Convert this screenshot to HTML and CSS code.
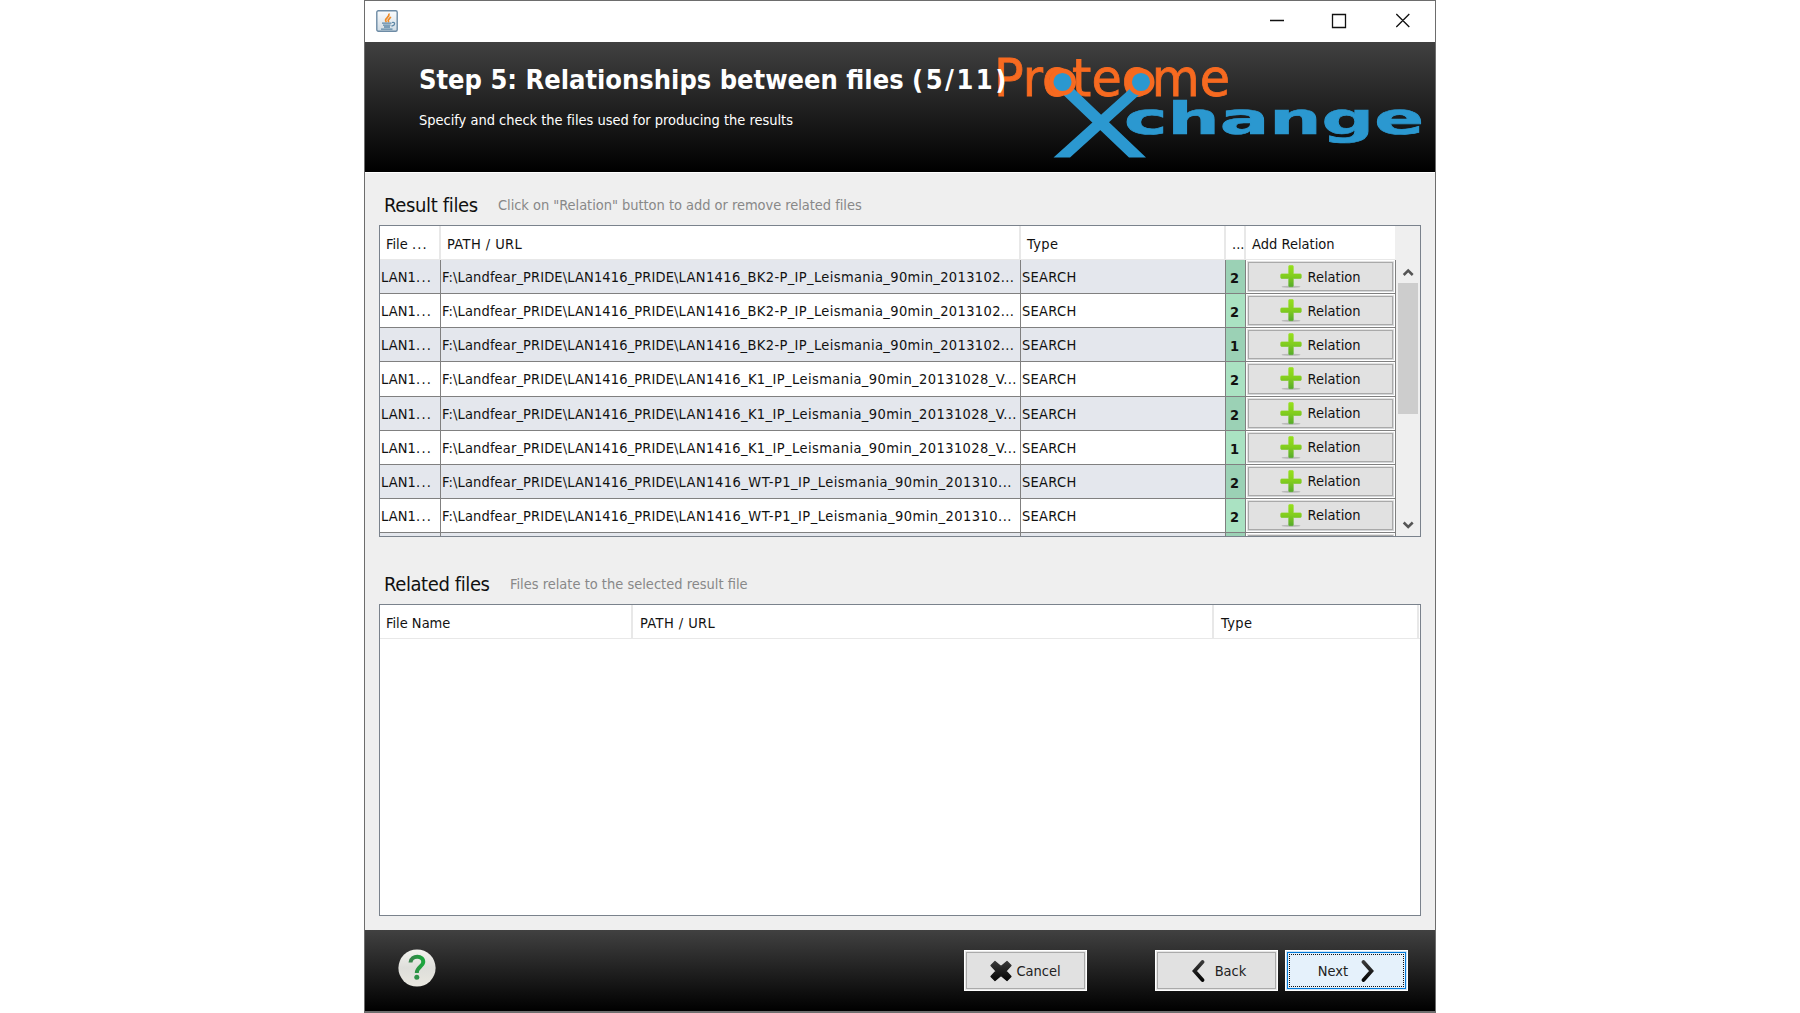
FILE: index.html
```html
<!DOCTYPE html>
<html lang="en">
<head>
<meta charset="utf-8">
<title>Relationships between files</title>
<link rel="stylesheet" href="styles.css">
</head>
<body>
<svg width="0" height="0" class="defs">
  <defs>
    <linearGradient id="green" x1="0" y1="0" x2="0" y2="1"><stop offset="0" stop-color="#95e01c"/><stop offset=".5" stop-color="#82cd1e"/><stop offset="1" stop-color="#56ab2c"/></linearGradient>
    <linearGradient id="ink" x1="0" y1="0" x2="0" y2="1"><stop offset="0" stop-color="#383838"/><stop offset="1" stop-color="#050505"/></linearGradient>
    <symbol id="plus" viewBox="0 0 22 24">
      <ellipse cx="11" cy="21.8" rx="9.5" ry="1" fill="#b9b9b9"/>
      <path d="M9.500 .5h3q.8 0 .8.8v7.600h7q1 0 1 1v2.600q0 1-1 1h-7v7.400q0 .8-.8.8h-3q-.8 0-.8-.8v-7.400h-7q-1 0-1-1V9.900q0-1 1-1h7V1.300q0-.8.8-.8z" fill="url(#green)" stroke="url(#green)" stroke-width=".6"/>
    </symbol>
  </defs>
</svg>
<main class="window">
  <div class="titlebar">
    <svg class="java" width="22" height="22" viewBox="0 0 22 22">
      <defs><linearGradient id="jb" x1="0" y1="0" x2="0" y2="1"><stop offset="0" stop-color="#fbfcfd"/><stop offset="1" stop-color="#cfdbe4"/></linearGradient></defs>
      <rect x=".8" y=".8" width="20.400" height="20.400" rx="1.500" fill="url(#jb)" stroke="#6d8ba5" stroke-width="1.400"/>
      <path d="M10.500 12C7 9 14 7.500 13 3.500M13 12c-2.500-2 1-3 1.700-5.200" fill="none" stroke="#f08a24" stroke-width="1.700"/>
      <path d="M6 13.200h9.500M7 15.200h7.500M8 17h6M5 19.200h11.500M16 12.500c3.500-1 3.500 3-.5 3.500" fill="none" stroke="#5d87a6" stroke-width="1.300"/>
    </svg>
    <svg class="controls" width="150" height="22" viewBox="0 0 150 22">
      <path d="M3 10.500h14M65.500 4.500h13v13h-13zM129.300 4l13 13M142.300 4l-13 13" fill="none" stroke="#111" stroke-width="1.300"/>
    </svg>
  </div>
  <header class="banner">
    <svg class="logo" width="440" height="130" viewBox="995 42 440 130">
      <text x="994" y="95.500" class="proteome" textLength="236" lengthAdjust="spacingAndGlyphs">Proteome</text>
      <path d="M1054 86H1071L1146 157.500H1129ZM1133 86H1149L1070 157.500H1053.500Z" class="x-arms"/>
      <circle cx="1062.500" cy="82" r="11.300" class="node"/>
      <circle cx="1141" cy="82" r="11.300" class="node"/>
      <text x="1124" y="134" class="change" textLength="300" lengthAdjust="spacingAndGlyphs">change</text>
    </svg>
    <h1>Step 5: Relationships between files <span>(5/11)</span></h1>
    <p>Specify and check the files used for producing the results</p>
  </header>
  <section class="content">
    <div class="heading"><h2>Result files</h2><span class="hint">Click on "Relation" button to add or remove related files</span></div>
    <div class="box results">
      <div class="grid">
        <div class="head cols"><span>File <i>...</i></span><span class="path">PATH / URL</span><span class="path">Type</span><span>...</span><span>Add Relation</span></div>
        <div class="row cols"><span>LAN1<i>...</i></span><span>F:\Landfear_PRIDE\LAN1416_PRIDE\<em>LAN1416_BK2-P_IP_Leismania_90min_2013102...</em></span><span>SEARCH</span><b>2</b><button><svg><use href="#plus"/></svg>Relation</button></div>
        <div class="row cols"><span>LAN1<i>...</i></span><span>F:\Landfear_PRIDE\LAN1416_PRIDE\<em>LAN1416_BK2-P_IP_Leismania_90min_2013102...</em></span><span>SEARCH</span><b>2</b><button><svg><use href="#plus"/></svg>Relation</button></div>
        <div class="row cols"><span>LAN1<i>...</i></span><span>F:\Landfear_PRIDE\LAN1416_PRIDE\<em>LAN1416_BK2-P_IP_Leismania_90min_2013102...</em></span><span>SEARCH</span><b>1</b><button><svg><use href="#plus"/></svg>Relation</button></div>
        <div class="row cols"><span>LAN1<i>...</i></span><span>F:\Landfear_PRIDE\LAN1416_PRIDE\<em class="wide">LAN1416_K1_IP_Leismania_90min_20131028_V...</em></span><span>SEARCH</span><b>2</b><button><svg><use href="#plus"/></svg>Relation</button></div>
        <div class="row cols"><span>LAN1<i>...</i></span><span>F:\Landfear_PRIDE\LAN1416_PRIDE\<em class="wide">LAN1416_K1_IP_Leismania_90min_20131028_V...</em></span><span>SEARCH</span><b>2</b><button><svg><use href="#plus"/></svg>Relation</button></div>
        <div class="row cols"><span>LAN1<i>...</i></span><span>F:\Landfear_PRIDE\LAN1416_PRIDE\<em class="wide">LAN1416_K1_IP_Leismania_90min_20131028_V...</em></span><span>SEARCH</span><b>1</b><button><svg><use href="#plus"/></svg>Relation</button></div>
        <div class="row cols"><span>LAN1<i>...</i></span><span>F:\Landfear_PRIDE\LAN1416_PRIDE\<em class="wider">LAN1416_WT-P1_IP_Leismania_90min_201310...</em></span><span>SEARCH</span><b>2</b><button><svg><use href="#plus"/></svg>Relation</button></div>
        <div class="row cols"><span>LAN1<i>...</i></span><span>F:\Landfear_PRIDE\LAN1416_PRIDE\<em class="wider">LAN1416_WT-P1_IP_Leismania_90min_201310...</em></span><span>SEARCH</span><b>2</b><button><svg><use href="#plus"/></svg>Relation</button></div>
        <div class="row cols"><span></span><span></span><span></span><b></b><button></button></div>
      </div>
      <div class="scroll">
        <svg width="20" height="23" viewBox="0 0 20 23"><path d="M5.700 15l4.500-4.500 4.500 4.500" class="chev"/></svg>
        <div class="thumb"></div>
        <svg width="20" height="23" viewBox="0 0 20 23"><path d="M5.700 8.500l4.500 4.500 4.500-4.500" class="chev"/></svg>
      </div>
    </div>
    <div class="heading second"><h2 class="rel">Related files</h2><span class="hint">Files relate to the selected result file</span></div>
    <div class="box related">
      <div class="head rcols"><span>File Name</span><span class="path">PATH / URL</span><span class="path">Type</span></div>
    </div>
  </section>
  <footer>
    <svg class="help" width="42" height="42" viewBox="0 0 42 42">
      <defs>
        <linearGradient id="hb" x1="0" y1="0" x2="0" y2="1"><stop offset="0" stop-color="#f3f3ef"/><stop offset=".5" stop-color="#dededa"/><stop offset="1" stop-color="#e9e8e0"/></linearGradient>
        <linearGradient id="hq"><stop offset="0" stop-color="#39834b"/><stop offset="1" stop-color="#1ba63d"/></linearGradient>
      </defs>
      <circle cx="21" cy="21" r="18.600" fill="url(#hb)"/>
      <path d="M14.500 15.500C15 7.500 28.200 8 27.200 15.500C26.700 19.500 20.800 20 20.800 26" fill="none" stroke="url(#hq)" stroke-width="4"/>
      <circle cx="20.800" cy="30.300" r="2.500" fill="#2f924a"/>
    </svg>
    <button class="nav cancel"><svg width="22" height="22" viewBox="0 0 22 22"><path d="M5 1.500L11 6.500L17 1.500L21 5.500L16 11L21 16.500L17 20.500L11 15.500L5 20.500L1 16.500L6 11L1 5.500Z" fill="url(#ink)" stroke="url(#ink)" stroke-width="1.200" stroke-linejoin="round"/></svg>Cancel</button>
    <button class="nav back"><svg width="14" height="22" viewBox="0 0 14 22"><path d="M11.500 2L3.500 11L11.500 20" fill="none" stroke="url(#ink)" stroke-width="3.700" stroke-linecap="round"/></svg>Back</button>
    <button class="nav next">Next<svg width="14" height="22" viewBox="0 0 14 22"><path d="M2.500 2L10.500 11L2.500 20" fill="none" stroke="url(#ink)" stroke-width="3.700" stroke-linecap="round"/></svg></button>
  </footer>
</main>
</body>
</html>
```
FILE: styles.css
```css
* { box-sizing: border-box; }
body {
  margin: 0;
  background: #fff;
  font: 14.5px "DejaVu Sans Condensed", "DejaVu Sans", sans-serif;
  font-stretch: condensed;
  color: #111;
  overflow: hidden;
}
.defs { display: block; height: 0; }
.window {
  width: 1072px;
  height: 1013px;
  margin-left: 364px;
  border: 1px solid #6d6d6d;
  border-bottom-width: 2px;
  display: flex;
  flex-direction: column;
  background: #efefef;
}
.titlebar {
  height: 41px;
  flex: none;
  background: #fff;
  display: flex;
  justify-content: space-between;
  padding: 9px 18px 0 11px;
}
.banner {
  height: 131px;
  flex: none;
  position: relative;
  padding: 20px 0 0 54px;
  background: linear-gradient(#414141, #000);
  border-bottom: 1px solid #fff;
  color: #fff;
}
.logo { position: absolute; right: 0; top: 0; }
.proteome { font: 51px "DejaVu Sans", sans-serif; fill: #f76a20; stroke: #f76a20; stroke-width: .8; }
.change { font: bold 45px "DejaVu Sans", sans-serif; fill: #2b98d0; stroke: #2b98d0; stroke-width: .7; }
.x-arms { fill: #2b98d0; }
.node { fill: #2b98d0; stroke: #f76a20; stroke-width: 4.500; }
h1, h2, p { margin: 0; font-weight: normal; white-space: nowrap; }
h1 { position: relative; font-size: 27px; line-height: 36px; font-weight: bold; }
h1 span { letter-spacing: 2.5px; }
p { position: relative; line-height: 20px; margin-top: 12px; letter-spacing: -.02px; }
i, em { font-style: normal; }
i { letter-spacing: 1.2px; }
.content { flex: 1; padding: 18px 14px 0; }
.heading { height: 34px; display: flex; padding-left: 5px; }
h2 { font-size: 20px; line-height: 29px; width: 114px; letter-spacing: -.35px; }
.rel { width: 126px; letter-spacing: -.4px; }
.hint { color: #888; white-space: nowrap; line-height: 28px; letter-spacing: -.04px; }
.rel + .hint { letter-spacing: 0; }
.box { border: 1px solid #7a828c; background: #fff; height: 312px; overflow: hidden; }
.results { display: flex; background: #efefef; }
.grid { width: 1016px; flex: none; }
.cols { display: grid; grid-template-columns: 61px 580px 205px 20px 150px; white-space: nowrap; }
.head { height: 34px; background: #fff; border-bottom: 1px solid #e8e8e8; line-height: 29px; }
.head.cols { width: 1015px; }
.head span { padding: 4px 0 0 6px; border-right: 2px solid #e8e8e8; }
.head .path { padding-left: 6px; letter-spacing: .42px; }
.rcols .path { padding-left: 7px; }
.head.cols span:last-child { border: 0; letter-spacing: .02px; }
.row { height: 34.130px; background: #fff; line-height: 35px; }
.row:nth-child(even) { background: #e4e7ed; }
.row > * { border: 0 solid #808080; border-width: 0 1px 1px 0; overflow: hidden; padding-left: 1px; }
.row > span:first-child { letter-spacing: .1px; }
.row > span:first-child i { letter-spacing: 1.300px; }
.row > span:nth-child(2) { letter-spacing: .13px; }
.row > span:nth-child(3) { letter-spacing: .3px; }
.row em { letter-spacing: .37px; }
.row em.wide { letter-spacing: .42px; }
.row em.wider { letter-spacing: .47px; }
.row b { background: #aae2c2; padding: 1px 0 0 4px; }
.row:nth-child(even) b { background: #9bd1b5; }
.row button {
  font: inherit;
  color: #111;
  padding: 1px 0 0;
  display: flex;
  align-items: center;
  justify-content: center;
  gap: 5px;
  border: 1px solid #808080;
  border-width: 0 1px 1px 0;
  background: #e1e1e1;
  box-shadow: inset 1px 1px #fff, inset -1px -1px #fff, inset 2px 2px #e1e1e1, inset -2px -2px #d4d6d8, inset 3px 3px #a9a9a9, inset -3px -3px #a9a9a9;
}
.row button svg { width: 22px; height: 24px; }
.scroll { flex: 1; display: flex; flex-direction: column; padding: 34px 2px 0; background: #efefef; }
.thumb { height: 131px; background: #cdcdcd; margin-bottom: 100px; flex: none; }
.scroll svg { flex: none; }
.chev { fill: none; stroke: #555; stroke-width: 2.500; }
.second { margin-top: 33px; }
.rcols { display: grid; grid-template-columns: 253px 581px 205px 1fr; white-space: nowrap; }
footer {
  height: 81px;
  flex: none;
  background: linear-gradient(#414141, #000);
  display: flex;
  align-items: flex-start;
  padding: 20px 27px 0 31px;
}
.help { margin-top: -3px; }
.nav {
  width: 123px;
  height: 41px;
  font: inherit;
  color: #222;
  display: flex;
  align-items: center;
  justify-content: center;
  border: 1px solid #fff;
  background: #e1e1e1;
  box-shadow: inset 0 0 0 1px #e6e6e6, inset 0 0 0 2px #aaa;
}
.cancel { margin-left: 526px; gap: 4px; }
.back { margin-left: 68px; gap: 10px; padding-left: 10px; }
.next {
  margin-left: 7px;
  gap: 13px;
  background: #e5f1fb;
  box-shadow: inset 0 0 0 1px #cde4f7, inset 0 0 0 2px #0078d7;
  outline: 1px dotted #111;
  outline-offset: -5px;
}
```
